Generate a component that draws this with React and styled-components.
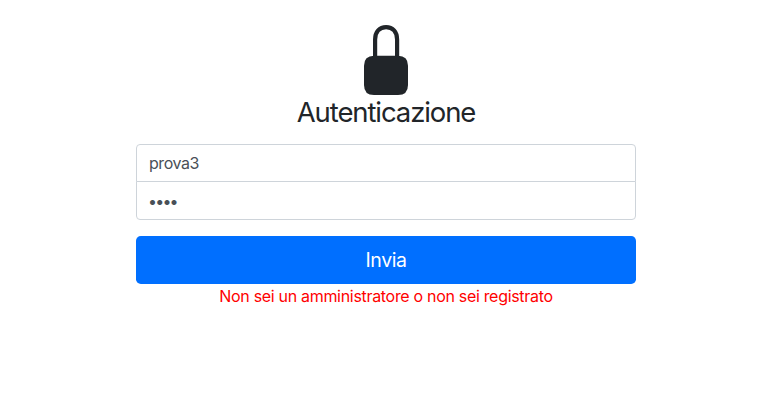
import React from "react";
import styled, { createGlobalStyle } from "styled-components";

const GlobalStyle = createGlobalStyle`
  *, *::before, *::after { box-sizing: border-box; }
  body {
    margin: 0;
    background: #fff;
    color: #212529;
    font-family: Inter, "Liberation Sans", sans-serif;
    font-size: 16px;
    line-height: 24px;
    overflow: hidden;
  }
`;

const Page = styled.main`
  display: flex;
  flex-direction: column;
  min-height: 402px;
  padding: 25px 0 0 136px;
`;

const SignInForm = styled.form`
  display: flex;
  flex-direction: column;
  width: 500px;
`;

const LockIcon = styled.svg`
  display: block;
  width: 44px;
  height: 70px;
  margin: 0 auto;
`;

const Title = styled.h1`
  margin: 0 0 15px;
  font-size: 27.5px;
  line-height: 34px;
  font-weight: 400;
  text-align: center;
  letter-spacing: -1.1px;
`;

const Field = styled.input`
  display: block;
  width: 100%;
  height: ${(p) => (p.$last ? "39px" : "38px")};
  margin: ${(p) => (p.$last ? "-1px" : "0")} 0 0;
  padding: 6px 12px;
  padding-left: ${(p) => (p.$last ? "11px" : "12px")};
  border: 1px solid #ced4da;
  border-radius: ${(p) => (p.$last ? "0 0 4px 4px" : "4px 4px 0 0")};
  background: #fff;
  color: #495057;
  font: inherit;
  letter-spacing: ${(p) => (p.$last ? "-1.8px" : "-0.45px")};
  outline: none;
`;

const SubmitButton = styled.button`
  height: 48px;
  margin: 16px 0 0;
  padding: 0;
  border: 0;
  border-radius: 4.8px;
  background: #006fff;
  color: #fff;
  font: inherit;
  font-size: 19.5px;
  letter-spacing: -0.45px;
`;

const ErrorText = styled.p`
  margin: 0;
  color: #ff0000;
  text-align: center;
  letter-spacing: -0.31px;
`;

export default function App() {
  return (
    <Page>
      <GlobalStyle />
      <SignInForm onSubmit={(e) => e.preventDefault()}>
        <LockIcon viewBox="0 0 44 70" aria-hidden="true">
          <path d="M11.1 34V14.5C11.1 6.5 15.5 2.1 22.1 2.1s11 4.4 11 12.4V34" fill="none" stroke="#212529" strokeWidth="4.2" />
          <path d="M10 30.7H34Q44 30.7 44 40.7V60Q44 70 34 70H10Q0 70 0 60V40.7Q0 30.7 10 30.7Z" fill="#212529" />
        </LockIcon>
        <Title>Autenticazione</Title>
        <Field type="text" aria-label="Username" defaultValue="prova3" />
        <Field $last type="password" aria-label="Password" defaultValue="abcd" />
        <SubmitButton type="submit">Invia</SubmitButton>
        <ErrorText>Non sei un amministratore o non sei registrato</ErrorText>
      </SignInForm>
    </Page>
  );
}
